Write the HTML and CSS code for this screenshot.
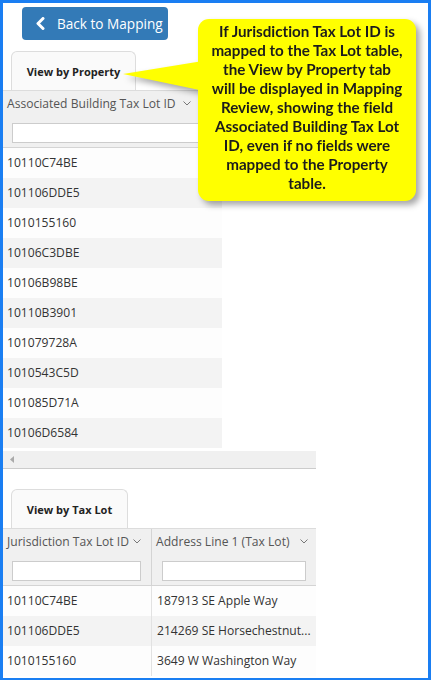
FILE: index.html
```html
<!DOCTYPE html>
<html>
<head>
<meta charset="utf-8">
<link rel="stylesheet" href="styles.css">
</head>
<body>
<div class="frame">
  <div class="toolbar">
    <button class="back-btn">
      <svg class="back-icon" width="10" height="13" viewBox="0 0 10 13"><path d="M8 1.5 L3 6.5 L8 11.5" fill="none" stroke="#fff" stroke-width="3" stroke-linecap="round" stroke-linejoin="round"/></svg>
      <span>Back to Mapping</span>
    </button>
  </div>

  <div class="section">
    <div class="tabs"><div class="tab tab-prop">View by Property</div></div>
    <div class="grid grid-prop">
      <div class="grid-header">
        <div class="hcell col-assoc">
          <div class="hlabel">Associated Building Tax Lot ID<svg class="sort" width="8" height="5" viewBox="0 0 8 5"><path d="M0.5 0.5 L4 4 L7.5 0.5" fill="none" stroke="#777" stroke-width="1"/></svg></div>
          <input class="filter" type="text">
        </div>
      </div>
      <div class="rows">
        <div class="row"><div class="cell col-assoc">10110C74BE</div></div>
        <div class="row"><div class="cell col-assoc">101106DDE5</div></div>
        <div class="row"><div class="cell col-assoc">1010155160</div></div>
        <div class="row"><div class="cell col-assoc">10106C3DBE</div></div>
        <div class="row"><div class="cell col-assoc">10106B98BE</div></div>
        <div class="row"><div class="cell col-assoc">10110B3901</div></div>
        <div class="row"><div class="cell col-assoc">101079728A</div></div>
        <div class="row"><div class="cell col-assoc">1010543C5D</div></div>
        <div class="row"><div class="cell col-assoc">101085D71A</div></div>
        <div class="row"><div class="cell col-assoc">10106D6584</div></div>
      </div>
      <div class="hscroll"><svg width="4" height="7" viewBox="0 0 4 7"><path d="M4 0 L0 3.5 L4 7 Z" fill="#aaa"/></svg></div>
    </div>
  </div>

  <div class="section section-lot">
    <div class="tabs"><div class="tab tab-lot">View by Tax Lot</div></div>
    <div class="grid grid-lot">
      <div class="grid-header">
        <div class="hcell col-jur">
          <div class="hlabel">Jurisdiction Tax Lot ID<svg class="sort sort-jur" width="8" height="5" viewBox="0 0 8 5"><path d="M0.5 0.5 L4 4 L7.5 0.5" fill="none" stroke="#777" stroke-width="1"/></svg></div>
          <input class="filter" type="text">
        </div>
        <div class="hcell col-addr">
          <div class="hlabel">Address Line 1 (Tax Lot)<svg class="sort sort-addr" width="8" height="5" viewBox="0 0 8 5"><path d="M0.5 0.5 L4 4 L7.5 0.5" fill="none" stroke="#777" stroke-width="1"/></svg></div>
          <input class="filter" type="text">
        </div>
      </div>
      <div class="rows">
        <div class="row"><div class="cell col-jur">10110C74BE</div><div class="cell col-addr">187913 SE Apple Way</div></div>
        <div class="row"><div class="cell col-jur">101106DDE5</div><div class="cell col-addr">214269 SE Horsechestnut...</div></div>
        <div class="row"><div class="cell col-jur">1010155160</div><div class="cell col-addr">3649 W Washington Way</div></div>
      </div>
    </div>
  </div>

  <div class="callout">
    <svg class="pointer" width="90" height="40" viewBox="0 0 90 40"><polygon points="0,16 86,2 86,34" fill="#ffff00"/></svg>
    <div class="callout-box">If Jurisdiction Tax Lot ID is<br>mapped to the Tax Lot table,<br>the View by Property tab<br>will be displayed in Mapping<br>Review, showing the field<br>Associated Building Tax Lot<br>ID, even if no fields were<br>mapped to the Property<br>table.</div>
  </div>
</div>
</body>
</html>
```

FILE: styles.css
```css
* { box-sizing: border-box; }
html, body { margin: 0; padding: 0; background: #fff; }
body { font-family: "Open Sans", "Noto Sans", sans-serif; color: #333; }

.frame {
  position: relative;
  width: 431px;
  height: 680px;
  overflow: hidden;
  border-style: solid;
  border-color: #1a7ef2;
  border-width: 3px 3px 2px 3px;
  background: #fff;
}

.toolbar { padding: 4px 0 0 19px; }
.back-btn {
  display: flex;
  align-items: center;
  width: 146px;
  height: 33px;
  padding: 0 0 0 13px;
  border: none;
  border-radius: 4px;
  background: #337ab7;
  color: #fff;
  font-family: "Open Sans", sans-serif;
  font-size: 13.6px;
}
.back-icon { margin-right: 12px; }

.section { margin-top: 11px; }
.section-lot { margin-top: 20px; }

.tabs { padding-left: 8px; display: flex; }
.tab {
  height: 39px;
  display: flex;
  align-items: center;
  justify-content: center;
  border: 1px solid #ddd;
  border-bottom: none;
  border-radius: 6px 6px 0 0;
  background: #fafafa;
  font-size: 11px;
  font-weight: 700;
  color: #222;
}
.tab-prop { width: 125px; }
.tab-lot { width: 117px; }

.grid { width: 313px; }
.grid-header {
  display: flex;
  background: #f0f0f0;
  border-top: 1px solid #dcdcdc;
  border-bottom: 1px solid #d4d4d4;
  height: 58px;
}
.hcell { padding: 0 0 0 4px; }
.hlabel {
  height: 26px;
  line-height: 26px;
  font-size: 12.1px;
  color: #555;
  white-space: nowrap;
  display: flex;
  align-items: center;
}
.sort { margin-left: 7px; margin-top: -2px; }
.sort-jur { margin-left: 4px; }
.sort-addr { margin-left: 10px; }
.filter {
  display: block;
  margin: 6px 0 0 5px;
  height: 20px;
  border: 1px solid #ccc;
  background: #fff;
  padding: 0;
}
.grid-prop .filter { width: 230px; }
.col-assoc { width: 219px; }
.col-jur { width: 149px; border-right: 1px solid #d4d4d4; }
.col-jur .filter { width: 129px; }
.col-addr { width: 164px; }
.col-addr .filter { width: 144px; margin-left: 6px; }

.rows { display: flex; flex-direction: column; }
.row { display: flex; height: 30px; background: #fdfdfd; }
.row:nth-child(even) { background: #f3f3f3; }
.grid-prop .row { width: 219px; }
.cell {
  padding-left: 4px;
  line-height: 30px;
  font-size: 12.1px;
  color: #333;
  white-space: nowrap;
  overflow: hidden;
}
.grid-lot .cell.col-jur { border-right: 1px solid #e2e2e2; }
.grid-lot .cell.col-addr { padding-left: 5px; }

.hscroll {
  margin-top: 3px;
  height: 18px;
  background: #f0f0f0;
  border-bottom: 1px solid #ccc;
  display: flex;
  align-items: center;
  padding-left: 7px;
}

.callout {
  position: absolute;
  left: 120px;
  top: 16px;
  width: 300px;
  height: 200px;
  filter: drop-shadow(4px 4px 3px rgba(0,0,0,0.35));
}
.pointer { position: absolute; left: 0; top: 39px; }
.callout-box {
  position: absolute;
  left: 75px;
  top: 0;
  width: 218px;
  height: 182px;
  background: #ffff00;
  border-radius: 11px;
  padding-top: 3px;
  text-align: center;
  font-family: "Lato", "Liberation Sans", sans-serif;
  font-weight: 700;
  font-size: 15.2px;
  font-variant-ligatures: none;
  line-height: 19px;
  color: #1c1c1c;
  white-space: nowrap;
}
```
